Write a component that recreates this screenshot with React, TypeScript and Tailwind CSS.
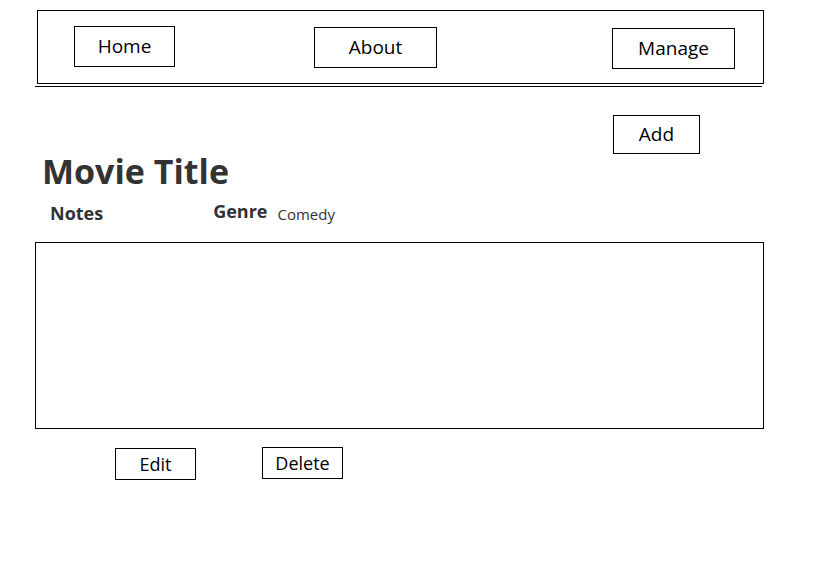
import React from 'react';

const Btn: React.FC<{ label: string; className?: string }> = ({ label, className = '' }) => (
  <div className={`flex items-center justify-center border border-black bg-white text-black ${className}`}>
    {label}
  </div>
);

const App: React.FC = () => {
  return (
    <div className="w-[828px] h-[579px] bg-white font-['Open_Sans',sans-serif] relative">
      <div className="pt-[10px] pl-[37px]">
        <nav className="w-[727px] h-[74px] border border-black flex items-start">
          <Btn label="Home" className="ml-[36px] mt-[15px] w-[101px] h-[41px] text-[19px]" />
          <Btn label="About" className="ml-[139px] mt-[16px] w-[123px] h-[41px] text-[19px]" />
          <Btn label="Manage" className="ml-[175px] mt-[17px] w-[123px] h-[41px] text-[19px]" />
        </nav>
      </div>
      <div className="ml-[35px] mt-[2px] w-[727px] border-t border-black" />

      <div className="flex">
        <Btn label="Add" className="ml-[613px] mt-[28px] w-[87px] h-[39px] text-[19px]" />
      </div>

      <h1 className="ml-[42px] mt-[-3px] text-[34px] leading-[40px] font-bold text-[#333]">Movie Title</h1>
      <div className="flex items-baseline mt-[9px] text-[#333]">
        <span className="ml-[50px] text-[18px] font-bold">Notes</span>
        <span className="ml-[110px] text-[18px] font-bold -translate-y-[2px]">Genre</span>
        <span className="ml-[10px] text-[15px]">Comedy</span>
      </div>

      <div className="ml-[35px] mt-[15px] w-[729px] h-[187px] border border-black" />

      <div className="flex items-start mt-[18px]">
        <Btn label="Edit" className="ml-[115px] mt-[1px] w-[81px] h-[32px] text-[18px]" />
        <Btn label="Delete" className="ml-[66px] w-[81px] h-[32px] text-[18px]" />
      </div>
    </div>
  );
};

export default App;
